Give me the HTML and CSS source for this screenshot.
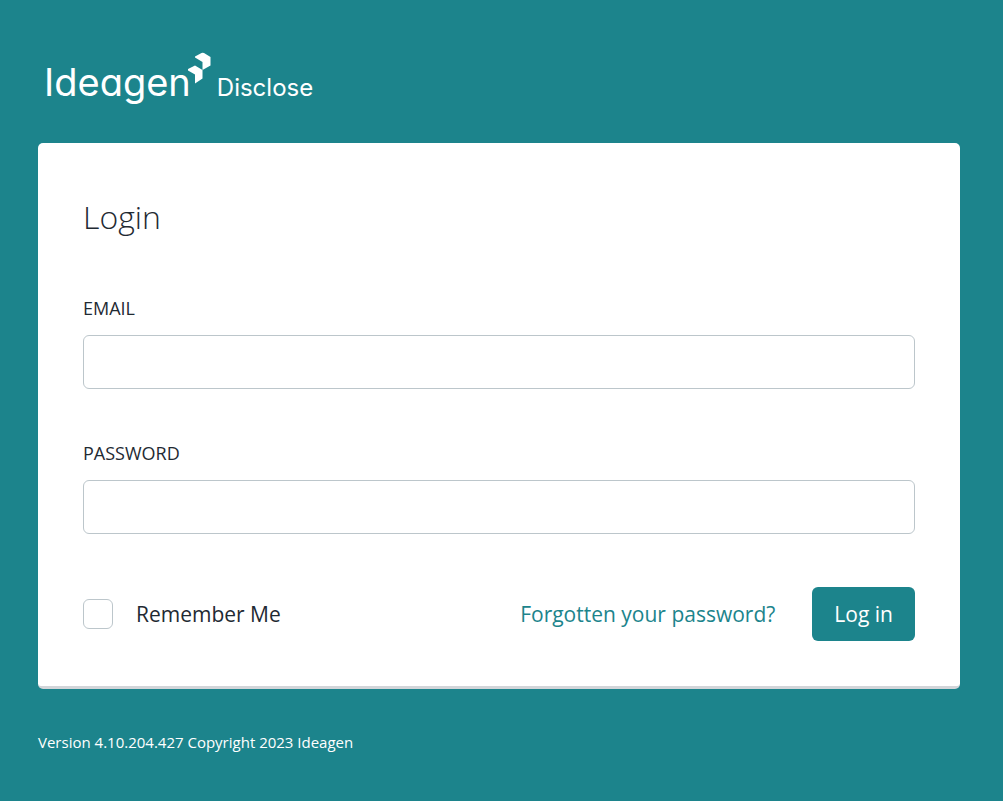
FILE: index.html
```html
<!DOCTYPE html>
<html lang="en">
<head>
  <meta charset="UTF-8" />
  <meta name="viewport" content="width=device-width, initial-scale=1.0" />
  <title>Ideagen Disclose - Login</title>
  <link rel="stylesheet" href="styles.css">
</head>
<body>
  <div class="page">
    <header class="logo">
      <span class="logo-name">Ideagen</span>
      <svg class="logo-mark" viewBox="0 0 24 32" aria-hidden="true">
        <path d="M7 4.5 L13.5 1 Q14.7 0.3 16 1 L22.5 5 V13.5 L14.5 18 V10 L7 5.5 Z" />
        <path d="M0 17 L7 13.5 L14.5 18 V26.5 L7 31.5 V22.5 L0 18.5 Z" />
      </svg>
      <span class="logo-product">Disclose</span>
    </header>

    <main class="card">
      <h1>Login</h1>
      <form>
        <div class="field">
          <label for="email">EMAIL</label>
          <input type="email" id="email" name="email">
        </div>
        <div class="field">
          <label for="password">PASSWORD</label>
          <input type="password" id="password" name="password">
        </div>
        <div class="actions">
          <label class="remember">
            <input type="checkbox" name="remember">
            Remember Me
          </label>
          <a href="#" class="forgot">Forgotten your password?</a>
          <button type="submit" class="btn">Log in</button>
        </div>
      </form>
    </main>

    <footer>Version 4.10.204.427 Copyright 2023 Ideagen</footer>
  </div>
</body>
</html>
```

FILE: styles.css
```css
* {
  margin: 0;
  padding: 0;
  box-sizing: border-box;
}

body {
  background: #1c848c;
  color: #1f2a33;
  font-family: 'Open Sans', sans-serif;
  font-size: 21px;
  line-height: 30px;
}

.page {
  padding: 48px 43px 40px 38px;
}

.logo {
  display: flex;
  align-items: baseline;
  height: 95px;
  padding-left: 6px;
  color: #fff;
  font-family: Inter, sans-serif;
  /* single-storey "a" */
  font-feature-settings: "cv11";
  line-height: 68px;
}

.logo-name {
  font-size: 38px;
}

.logo-mark {
  width: 24px;
  height: 32px;
  margin: 4px 0 0 -3px;
  align-self: flex-start;
  fill: #fff;
}

.logo-product {
  margin-left: 5px;
  font-size: 24px;
}

.card {
  padding: 52px 45px 45px;
  background: #fff;
  border-radius: 5px;
  border-bottom: 3px solid #d2d5d9;
}

h1 {
  margin-bottom: 54px;
  font-size: 32px;
  font-weight: 300;
  line-height: 44px;
}

.field {
  margin-bottom: 49px;
}

.field label {
  display: block;
  margin-bottom: 12px;
  font-size: 18px;
  line-height: 30px;
}

.field input {
  display: block;
  width: 100%;
  height: 54px;
  padding: 0 16px;
  border: 1px solid #bcc6cb;
  border-radius: 6px;
  font: inherit;
}

.actions {
  display: flex;
  align-items: center;
  padding-top: 4px;
}

.remember {
  display: flex;
  align-items: center;
  gap: 23px;
}

.remember input {
  appearance: none;
  width: 30px;
  height: 30px;
  border: 1px solid #bcc6cb;
  border-radius: 6px;
}

.remember input:checked {
  background: #1c848c;
}

.forgot {
  margin-left: auto;
  color: #1c848c;
  text-decoration: none;
}

.btn {
  height: 54px;
  margin-left: 37px;
  padding: 0 22px;
  background: #1c848c;
  border: none;
  border-radius: 6px;
  color: #fff;
  font: inherit;
  cursor: pointer;
}

footer {
  margin-top: 41px;
  color: #fff;
  font-size: 15px;
  line-height: 24px;
}
```
